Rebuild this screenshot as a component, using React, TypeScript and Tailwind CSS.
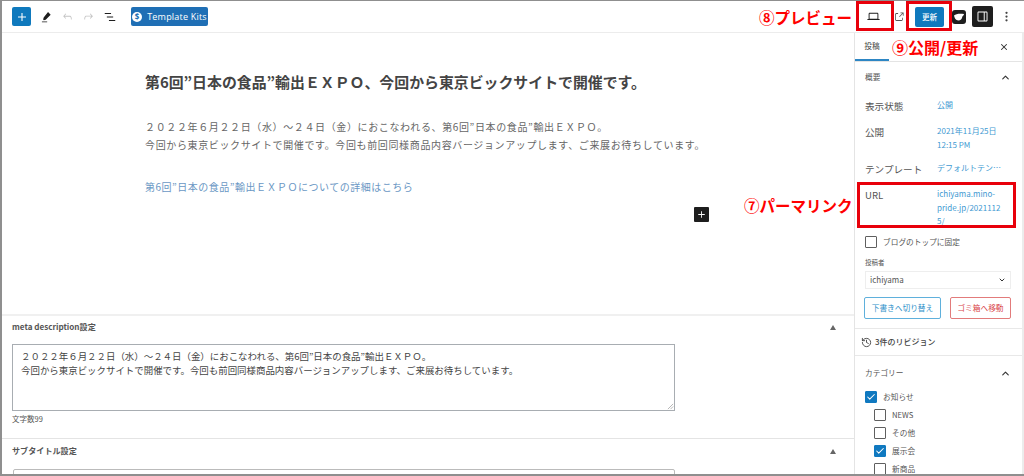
import { ChevronUp, ChevronDown, Check, X, History } from "lucide-react";

const jp = "font-['Noto_Sans_CJK_JP','Noto_Sans',sans-serif]";

function WpIcon({ d, className }: { d: string; className?: string }) {
  return (
    <svg viewBox="0 0 24 24" className={className} fill="currentColor">
      <path d={d} />
    </svg>
  );
}

function CheckRow({ label, checked, indent }: { label: string; checked?: boolean; indent?: boolean }) {
  return (
    <div className={`flex items-center h-[18px] gap-[6px] ${indent ? "pl-[9px]" : ""}`}>
      <span
        className={`w-[12px] h-[12px] flex items-center justify-center rounded-[1px] border ${
          checked ? "bg-[#1079c0] border-[#1079c0]" : "border-[#5f5f5f] bg-white"
        }`}
      >
        {checked && <Check className="w-[10px] h-[10px] text-white" strokeWidth={2.5} />}
      </span>
      <span className="text-[7.7px] leading-[10px] text-[#555]">{label}</span>
    </div>
  );
}

function SideRow({ label, h, children }: { label: string; h: string; children: React.ReactNode }) {
  return (
    <div className={`flex ${h}`}>
      <span className="w-[72px] text-[9.6px] leading-[14px] text-[#555] shrink-0">{label}</span>
      <div className="-mt-[1px] text-[8px] leading-[13.5px] text-[#3f9ad2] min-w-0">{children}</div>
    </div>
  );
}

export default function App() {
  return (
    <div className={`relative w-[1024px] h-[476px] overflow-hidden bg-white border-l-2 border-t border-b-2 border-[#8f8f8f] flex flex-col ${jp}`}>
      {/* toolbar */}
      <header className="h-[32px] shrink-0 flex items-center pl-[10px] border-b border-[#ececec] text-[#1e1e1e]">
        <button className="w-[19px] h-[19px] bg-[#0f79bd] rounded-[2px] flex items-center justify-center text-white">
          <WpIcon className="w-[16px] h-[16px]" d="M18 11.2h-5.2V6h-1.6v5.2H6v1.6h5.2V18h1.6v-5.2H18z" />
        </button>
        <WpIcon className="w-[14px] h-[14px] ml-[8px]" d="M15.5 3.5 20 8l-8.5 8.5-3.2.9-1.2-1.2.9-3.2zM5 19.5h9V21H5z" />
        <WpIcon className="w-[13px] h-[13px] ml-[8px] text-[#c4c4c4]" d="M18.3 11.7c-.6-.6-1.4-.9-2.3-.9H6.7l2.9-3.3-1.1-1-4.5 5L8.5 16l1-1-2.7-2.7H16c.5 0 .9.2 1.3.5 1 1 1 3.4 1 4.5v.3h1.5v-.2c0-1.5 0-4.3-1.5-5.7z" />
        <WpIcon className="w-[13px] h-[13px] ml-[8px] text-[#c4c4c4]" d="M15.6 6.5l-1.1 1 2.9 3.3H8c-.9 0-1.7.3-2.3.9-1.4 1.5-1.4 4.2-1.4 5.6v.2h1.5v-.3c0-1.1 0-3.5 1-4.5.3-.3.7-.5 1.3-.5h9.2L14.5 15l1.1 1.1 4.6-4.6-4.6-5z" />
        <WpIcon className="w-[14px] h-[14px] ml-[8px]" d="M13.8 5.2H3v1.5h10.8V5.2zm-3.6 12v1.5H21v-1.5H10.2zm7.2-6H6.6v1.5h10.8v-1.5z" />
        <button className="ml-[14px] w-[77px] h-[19px] bg-[#1f6fb5] rounded-[2px] flex items-center justify-center gap-[5px] text-white text-[9px] font-['Open_Sans',sans-serif] tracking-[0.2px]">
          <span className="w-[10px] h-[10px] rounded-full bg-white text-[#1f6fb5] text-[8px] leading-[10px] text-center font-bold">$</span>
          Template Kits
        </button>
        <div className="ml-auto flex items-center">
          <WpIcon className="w-[15px] h-[15px] mr-[12px]" d="M20.5 16h-.7V8c0-1.1-.9-2-2-2H6.2c-1.1 0-2 .9-2 2v8h-.7c-.8 0-1.5.7-1.5 1.5h20c0-.8-.7-1.5-1.5-1.5zM5.7 8c0-.3.2-.5.5-.5h11.6c.3 0 .5.2.5.5v7.6H5.7V8z" />
          <WpIcon className="w-[12px] h-[12px] mr-[10px] text-[#555]" d="M18.2 17c0 .7-.6 1.2-1.2 1.2H7c-.7 0-1.2-.6-1.2-1.2V7c0-.7.6-1.2 1.2-1.2h3.2V4.2H7C5.5 4.2 4.2 5.5 4.2 7v10c0 1.5 1.2 2.8 2.8 2.8h10c1.5 0 2.8-1.2 2.8-2.8v-3.6h-1.5V17zM14.9 3v1.5h3.7l-6.4 6.4 1.1 1.1 6.4-6.4v3.7h1.5V3h-6.3z" />
          <button className="w-[29px] h-[20px] bg-[#0f79bd] rounded-[2px] text-white text-[7.5px] font-medium">更新</button>
          <span className="ml-[8px] w-[14px] h-[14px] bg-[#1e1e1e] rounded-[3px] flex items-center justify-center">
            <svg viewBox="0 0 14 14" className="w-[14px] h-[14px]" fill="#fff">
              <path d="M2 5.5C4 3.6 8 3.4 12 4c-.3 1.4-1 2-1.6 2.4C10 9 8.6 10.5 6.2 10.5 3.8 10.5 2.4 8 2 5.5z" />
            </svg>
          </span>
          <span className="ml-[6px] w-[21px] h-[21px] bg-[#1e1e1e] rounded-[2px] flex items-center justify-center text-white">
            <WpIcon className="w-[15px] h-[15px]" d="M18 4H6c-1.1 0-2 .9-2 2v12c0 1.1.9 2 2 2h12c1.1 0 2-.9 2-2V6c0-1.1-.9-2-2-2zm-4 14.5H6c-.3 0-.5-.2-.5-.5V6c0-.3.2-.5.5-.5h8v13zm4.5-.5c0 .3-.2.5-.5.5h-2.5v-13H18c.3 0 .5.2.5.5v12z" />
          </span>
          <svg viewBox="0 0 4 14" className="ml-[12px] mr-[16px] w-[3px] h-[11px]" fill="#444">
            <circle cx="2" cy="2" r="1.5" />
            <circle cx="2" cy="7" r="1.5" />
            <circle cx="2" cy="12" r="1.5" />
          </svg>
        </div>
      </header>

      <div className="flex flex-1 min-h-0">
        {/* editor column */}
        <main className="w-[853px] shrink-0 flex flex-col border-r border-[#e4e4e4]">
          <section className="relative h-[283px] shrink-0 pl-[143px] pt-[38px] border-b-2 border-[#f0f0f0]">
            <h1 className="text-[14.9px] leading-[22px] font-bold text-[#444]">第6回”日本の食品”輸出ＥＸＰＯ、今回から東京ビックサイトで開催です。</h1>
            <p className="mt-[25px] text-[10px] leading-[18px] tracking-[0.63px] text-[#666]">
              ２０２２年６月２２日（水）～２４日（金）におこなわれる、第6回”日本の食品”輸出ＥＸＰＯ。
              <br />
              今回から東京ビックサイトで開催です。今回も前回同様商品内容バージョンアップします、ご来展お待ちしています。
            </p>
            <p className="mt-[24px] text-[10px] leading-[18px] tracking-[0.5px] text-[#6a97c4]">第6回”日本の食品”輸出ＥＸＰＯについての詳細はこちら</p>
            <span className="absolute left-[692px] top-[174px] w-[15px] h-[15px] bg-[#1e1e1e] rounded-[1px] flex items-center justify-center text-white">
              <WpIcon className="w-[13px] h-[13px]" d="M18 11.2h-5.2V6h-1.6v5.2H6v1.6h5.2V18h1.6v-5.2H18z" />
            </span>
          </section>

          <section className="h-[123px] shrink-0 pl-[10px] pr-[18px] pt-[4px] border-b border-[#e4e4e4]">
            <div className="flex items-center justify-between h-[14px]">
              <span className="text-[8.1px] font-bold text-[#555]">meta description設定</span>
              <span className="w-0 h-0 border-x-[3px] border-x-transparent border-b-[5px] border-b-[#666]" />
            </div>
            <div className="relative mt-[10px] w-[663px] h-[67px] border border-[#a8adb2] px-[8px] pt-[4px] text-[9.45px] leading-[14px] text-[#444]">
              ２０２２年６月２２日（水）～２４日（金）におこなわれる、第6回”日本の食品”輸出ＥＸＰＯ。
              <br />
              今回から東京ビックサイトで開催です。今回も前回同様商品内容バージョンアップします、ご来展お待ちしています。
              <svg viewBox="0 0 8 8" className="absolute right-0 bottom-0 w-[7px] h-[7px]" stroke="#999" strokeWidth="0.8">
                <path d="M1 7 7 1M4 7l3-3" />
              </svg>
            </div>
            <p className="mt-[2px] text-[7.5px] leading-[12px] text-[#555]">文字数99</p>
          </section>

          <section className="flex-1 pl-[10px] pr-[18px] pt-[5px]">
            <div className="flex items-center justify-between h-[14px]">
              <span className="text-[8.1px] font-bold text-[#555]">サブタイトル設定</span>
              <span className="w-0 h-0 border-x-[3px] border-x-transparent border-b-[5px] border-b-[#666]" />
            </div>
            <div className="mt-[11px] ml-[1px] w-[662px] h-[20px] border border-[#bbb] rounded-[2px]" />
          </section>
        </main>

        {/* settings sidebar */}
        <aside className="flex-1 min-w-0 overflow-hidden flex flex-col border-r-2 border-[#ececec]">
          <div className="h-[29px] shrink-0 flex items-stretch border-b border-[#e4e4e4] pr-[13px]">
            <span className="w-[34px] flex items-center justify-center text-[7.7px] text-[#444] border-b-2 border-[#2d86c4]">投稿</span>
            <X className="ml-auto self-center w-[10px] h-[10px] text-[#333]" strokeWidth={2.5} />
          </div>

          <div className="pl-[10px] pr-[8px] pt-[8px] pb-[9px] border-b border-[#e8e8e8]">
            <div className="flex items-center justify-between h-[14px] pr-[3px]">
              <span className="text-[7.7px] text-[#555]">概要</span>
              <ChevronUp className="w-[11px] h-[11px] text-[#333]" strokeWidth={2.5} />
            </div>
            <div className="mt-[15px] flex flex-col">
              <SideRow label="表示状態" h="h-[26px]">公開</SideRow>
              <SideRow label="公開" h="h-[37px]">
                2021年11月25日
                <br />
                12:15 PM
              </SideRow>
              <SideRow label="テンプレート" h="h-[26px]">デフォルトテン…</SideRow>
              <SideRow label="URL" h="h-[45px]">
                ichiyama.mino-
                <br />
                pride.jp/2021112
                <br />
                5/
              </SideRow>
              <div className="h-[18px] flex items-center gap-[6px]">
                <span className="w-[12px] h-[12px] border border-[#5f5f5f] rounded-[1px]" />
                <span className="text-[7.7px] text-[#555]">ブログのトップに固定</span>
              </div>
            </div>
            <p className="mt-[5px] text-[6.5px] leading-[12px] text-[#555]">投稿者</p>
            <div className="mt-[3px] mr-[3px] h-[18px] border border-[#eee] flex items-center justify-between px-[4px] text-[8px] text-[#555]">
              ichiyama
              <ChevronDown className="w-[8px] h-[8px] text-[#333]" strokeWidth={3} />
            </div>
            <div className="mt-[8px] -ml-[1px] flex justify-between pr-[3px]">
              <button className="w-[77px] h-[22px] border border-[#5fb0dc] rounded-[2px] text-[7.7px] text-[#2d8fc9]">下書きへ切り替え</button>
              <button className="w-[61px] h-[22px] border border-[#e27b7b] rounded-[2px] text-[7.7px] text-[#d9454a]">ゴミ箱へ移動</button>
            </div>
          </div>

          <div className="h-[27px] shrink-0 flex items-center gap-[3px] px-[6px] border-b border-[#e8e8e8] text-[#444]">
            <History className="w-[11px] h-[11px]" strokeWidth={2} />
            <span className="text-[8px] font-medium">3件のリビジョン</span>
          </div>

          <div className="pl-[10px] pr-[8px] pt-[10px]">
            <div className="flex items-center justify-between h-[14px] pr-[3px]">
              <span className="text-[7.7px] text-[#555]">カテゴリー</span>
              <ChevronUp className="w-[11px] h-[11px] text-[#333]" strokeWidth={2.5} />
            </div>
            <div className="mt-[8px] flex flex-col">
              <CheckRow label="お知らせ" checked />
              <CheckRow label="NEWS" indent />
              <CheckRow label="その他" indent />
              <CheckRow label="展示会" checked indent />
              <CheckRow label="新商品" indent />
            </div>
          </div>
        </aside>
      </div>

      {/* red annotations over the screenshot */}
      <span className="absolute left-[757px] top-[5px] text-[15.5px] leading-[22px] font-bold text-[#ff0000] whitespace-nowrap">⑧プレビュー</span>
      <span className="absolute left-[854px] top-[0px] w-[38px] h-[30px] border-[3px] border-[#e8000b]" />
      <span className="absolute left-[904px] top-[0px] w-[46px] h-[30px] border-[3px] border-[#e8000b]" />
      <span className="absolute left-[890px] top-[35px] text-[16px] leading-[22px] font-bold text-[#ff0000] whitespace-nowrap">⑨公開/更新</span>
      <span className="absolute left-[855px] top-[181px] w-[159px] h-[46px] border-[3px] border-[#e8000b]" />
      <span className="absolute left-[742px] top-[193px] text-[15.5px] leading-[22px] font-bold text-[#ff0000] whitespace-nowrap">⑦パーマリンク</span>
    </div>
  );
}
